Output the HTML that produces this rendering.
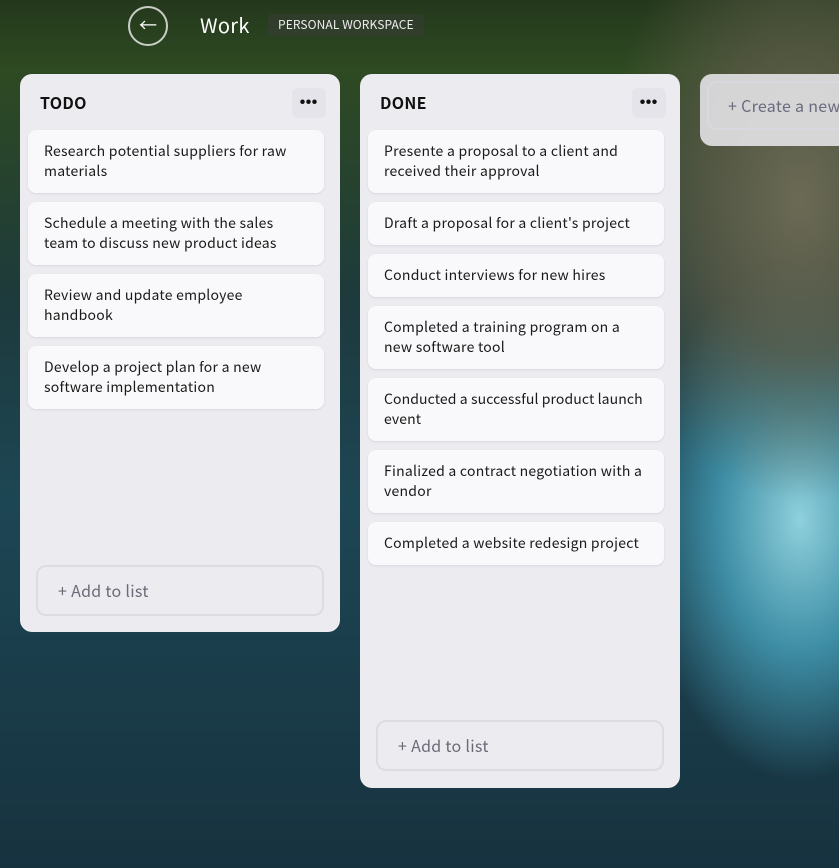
<!DOCTYPE html>
<html><head><style>
*{box-sizing:border-box;margin:0;padding:0}
body{width:839px;height:868px;overflow:hidden;position:relative;font-family:"Noto Sans CJK JP","Liberation Sans",sans-serif;
background:
radial-gradient(ellipse 200px 300px at 800px 200px,#6b6a55 0%,rgba(90,90,70,.8) 50%,rgba(0,0,0,0) 100%),
radial-gradient(ellipse 160px 260px at 800px 520px,#8fd0dc 0%,#3e8ea6 50%,rgba(30,80,100,0) 100%),
linear-gradient(180deg,#24381c 0px,#2e4a22 70px,#1d3a3c 300px,#1d4654 500px,#17323f 868px);}
.back{position:absolute;left:128px;top:6px;width:40px;height:40px;border:2px solid rgba(255,255,255,.75);border-radius:50%;color:#fff;font-size:18px;text-align:center;line-height:34px}
.title{position:absolute;left:200px;top:10px;color:#fff;font-size:20px;line-height:30px;letter-spacing:.3px}
.badge{position:absolute;left:268px;top:14px;padding:2px 10px;background:rgba(60,60,60,.45);color:#eee;font-size:12px;line-height:18px;border-radius:3px;letter-spacing:.1px}
.col{position:absolute;top:74px;width:320px;background:#ecebf0;border-radius:12px}
.col h2{position:absolute;left:20px;top:17px;font-size:16px;line-height:22px;font-weight:bold;color:#111;letter-spacing:.3px}
.dots{position:absolute;right:14px;top:14px;width:34px;height:30px;border-radius:6px;background:#e5e4ea;text-align:center;font-size:5px;line-height:30px;color:#111;letter-spacing:1px}
.card{position:absolute;left:8px;width:296px;background:#f9f9fb;border-radius:8px;padding:11px 18px 12px 16px;font-size:14px;line-height:20px;color:#1a1a1a;box-shadow:0 1px 2px rgba(0,0,0,.08);letter-spacing:.25px}
.add{position:absolute;left:16px;width:288px;height:51px;border:2px solid #dcdce2;border-radius:10px;color:#6b6b78;font-size:16px;line-height:20px;padding:13px 20px;letter-spacing:.3px}
.create{position:absolute;left:700px;top:74px;width:160px;height:72px;background:rgba(236,235,240,.85);border-radius:12px}
.create div{position:absolute;left:7px;top:7px;width:160px;height:49px;border:2px solid #d8d8e0;border-radius:10px;color:#6b6b80;font-size:16px;line-height:20px;padding:12px 19px;white-space:nowrap;letter-spacing:.3px}
</style></head><body>
<div class="back">←</div>
<div class="title">Work</div>
<div class="badge">PERSONAL WORKSPACE</div>

<div class="col" style="left:20px;height:558px">
<h2>TODO</h2><div class="dots">●●●</div>
<div class="card" style="top:56px">Research potential suppliers for raw materials</div>
<div class="card" style="top:128px">Schedule a meeting with the sales team to discuss new product ideas</div>
<div class="card" style="top:200px">Review and update employee handbook</div>
<div class="card" style="top:272px">Develop a project plan for a new software implementation</div>
<div class="add" style="top:491px">+ Add to list</div>
</div>

<div class="col" style="left:360px;height:714px">
<h2>DONE</h2><div class="dots">●●●</div>
<div class="card" style="top:56px">Presente a proposal to a client and received their approval</div>
<div class="card" style="top:128px">Draft a proposal for a client's project</div>
<div class="card" style="top:180px">Conduct interviews for new hires</div>
<div class="card" style="top:232px">Completed a training program on a new software tool</div>
<div class="card" style="top:304px;letter-spacing:.1px;padding-right:8px">Conducted a successful product launch<br>event</div>
<div class="card" style="top:376px">Finalized a contract negotiation with a vendor</div>
<div class="card" style="top:448px">Completed a website redesign project</div>
<div class="add" style="top:646px">+ Add to list</div>
</div>

<div class="create"><div>+ Create a new list</div></div>
</body></html>
